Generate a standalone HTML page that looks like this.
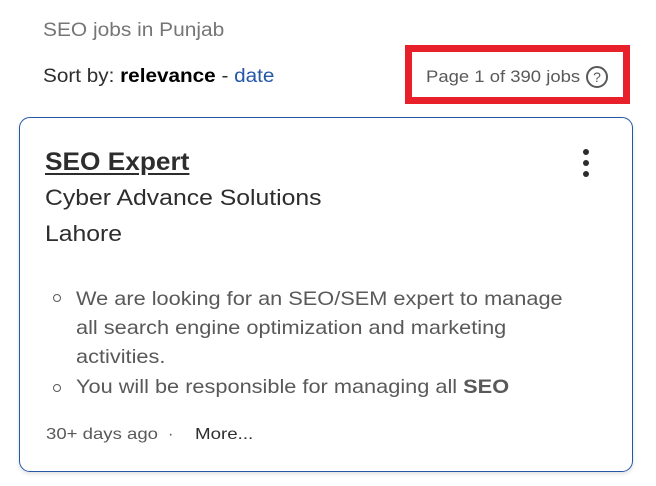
<!DOCTYPE html>
<html><head><style>
body{margin:0;width:656px;height:486px;background:#fff;font-family:"Liberation Sans",sans-serif;position:relative;overflow:hidden}
.a{position:absolute;white-space:nowrap;line-height:1;transform-origin:0 0}
</style></head><body>
<div class="a" style="left:43px;top:21px;font-size:19px;color:#767676;transform:scaleX(1.1)">SEO jobs in Punjab</div>
<div class="a" style="left:43px;top:67px;font-size:19px;color:#2d2d2d;transform:scaleX(1.09)">Sort by: <b style="color:#000">relevance</b> - <span style="color:#2557a7">date</span></div>
<div class="a" style="left:405px;top:45px;width:211px;height:45px;border:7px solid #e8202a"></div>
<div class="a" style="left:426px;top:69px;font-size:16.5px;color:#595959;transform:scaleX(1.12)">Page 1 of 390 jobs</div>
<div class="a" style="left:586px;top:66px;width:22px;height:22px;border:2px solid #595959;border-radius:50%;box-sizing:border-box;font-size:14px;color:#595959;text-align:center;line-height:19px">?</div>
<div class="a" style="left:19px;top:117px;width:614px;height:355px;border:1px solid #2557a7;border-radius:11px;box-sizing:border-box;box-shadow:0 2px 4px rgba(0,0,0,.12)"></div>
<div class="a" style="left:45px;top:150px;font-size:25px;font-weight:bold;color:#2d2d2d;text-decoration:underline;text-underline-offset:3px;transform:scaleX(1.05)">SEO Expert</div>
<div class="a" style="left:583px;top:149px;width:6px;height:6px;border-radius:50%;background:#2d2d2d"></div>
<div class="a" style="left:583px;top:160px;width:6px;height:6px;border-radius:50%;background:#2d2d2d"></div>
<div class="a" style="left:583px;top:171px;width:6px;height:6px;border-radius:50%;background:#2d2d2d"></div>
<div class="a" style="left:45px;top:187px;font-size:22.5px;color:#2d2d2d;transform:scaleX(1.1)">Cyber Advance Solutions</div>
<div class="a" style="left:45px;top:223px;font-size:22.5px;color:#2d2d2d;transform:scaleX(1.1)">Lahore</div>
<div class="a" style="left:53px;top:294px;width:8px;height:8px;border:1.3px solid #595959;border-radius:50%;box-sizing:border-box"></div>
<div class="a" style="left:76px;top:290px;font-size:19.5px;color:#595959;line-height:29px;margin-top:-5px;transform:scaleX(1.115)">We are looking for an SEO/SEM expert to manage<br>all search engine optimization and marketing<br>activities.</div>
<div class="a" style="left:53px;top:384px;width:8px;height:8px;border:1.3px solid #595959;border-radius:50%;box-sizing:border-box"></div>
<div class="a" style="left:76px;top:378px;font-size:19.5px;color:#595959;transform:scaleX(1.115)">You will be responsible for managing all <b>SEO</b></div>
<div class="a" style="left:46px;top:427px;font-size:16px;color:#595959;transform:scaleX(1.16)">30+ days ago</div>
<div class="a" style="left:168px;top:427px;font-size:16px;color:#595959">·</div>
<div class="a" style="left:195px;top:427px;font-size:16px;color:#2d2d2d;transform:scaleX(1.17)">More...</div>
</body></html>
